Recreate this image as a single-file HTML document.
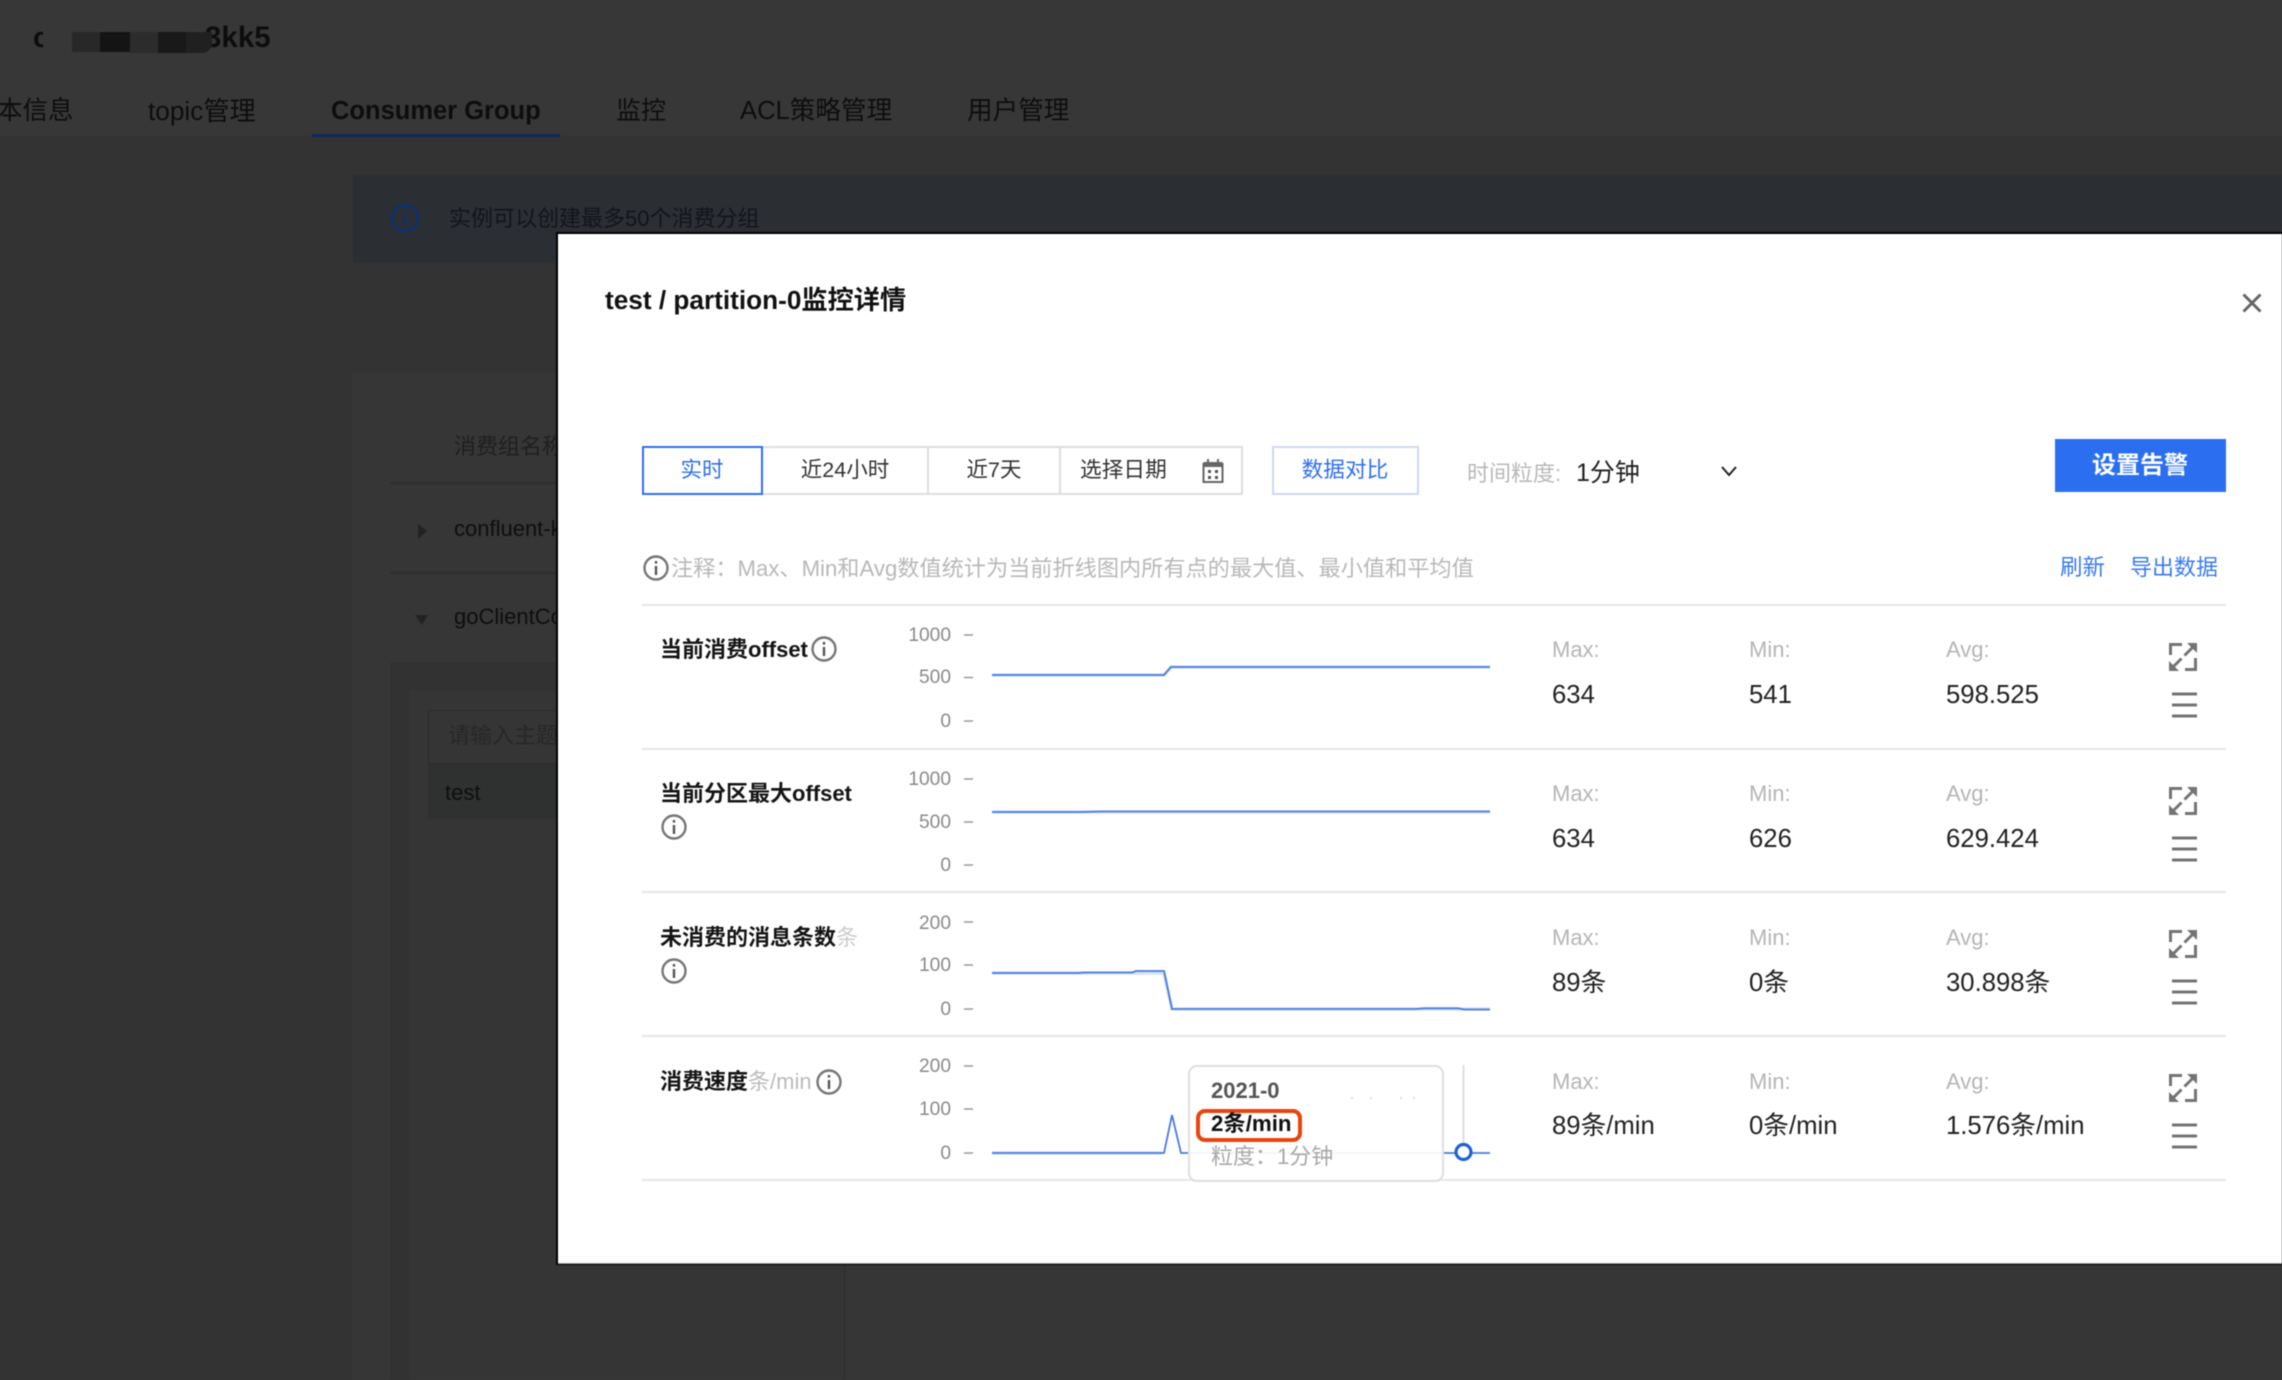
<!DOCTYPE html>
<html lang="zh-CN">
<head>
<meta charset="utf-8">
<title>监控详情</title>
<style>
html,body{margin:0;padding:0;background:#333;}
#p{position:relative;width:2282px;height:1380px;overflow:hidden;background:#333;font-family:"Liberation Sans","Noto Sans CJK SC",sans-serif;color:#333;filter:blur(.45px);}
.b{position:absolute;box-sizing:border-box;}
.t{position:absolute;white-space:nowrap;line-height:40px;height:40px;font-size:22px;}
.d{color:#0d0d0d;}
.g{color:#b8b8b8;}
.k{font-weight:bold;color:#141414;}
.y{color:#8a8a8a;font-size:19.2px;text-align:right;width:60px;left:891px;margin-top:1px;}
.v{color:#222;font-size:25.7px;}
.l{color:#b5b5b5;font-size:22px;}
.c{transform:translateX(-50%);}
svg{position:absolute;left:0;top:0;}
</style>
</head>
<body>
<div id="p">
  <!-- dark backdrop page -->
  <div class="b" style="left:0;top:0;width:2282px;height:137px;background:#373737;"></div>
  <div class="b" style="left:0;top:136px;width:2282px;height:2px;background:#323232;"></div>
  <div class="t d" style="left:33px;top:18px;font-size:29px;font-weight:bold;">c</div>
  <div class="t d" style="left:205px;top:18px;font-size:29.500px;font-weight:bold;">3kk5</div>
  <div class="b" style="left:43px;top:26px;width:29px;height:24px;background:#373737;"></div>
  <div class="b" style="left:72px;top:32px;width:28px;height:20px;background:#282828;"></div>
  <div class="b" style="left:100px;top:32px;width:30px;height:20px;background:#141414;"></div>
  <div class="b" style="left:130px;top:32px;width:28px;height:21px;background:#2c2c2c;"></div>
  <div class="b" style="left:158px;top:32px;width:28px;height:21px;background:#191919;"></div>
  <div class="b" style="left:186px;top:32px;width:26px;height:21px;background:#202020;border-radius:0 0 10px 0;"></div>

  <div class="t d" style="left:-3px;top:91px;font-size:25.500px;">本信息</div>
  <div class="t d" style="left:148px;top:91px;font-size:26.200px;">topic管理</div>
  <div class="t d" style="left:331px;top:91px;font-size:25.500px;font-weight:bold;">Consumer Group</div>
  <div class="t d" style="left:616px;top:91px;font-size:25px;">监控</div>
  <div class="t d" style="left:740px;top:91px;font-size:25.600px;">ACL策略管理</div>
  <div class="t d" style="left:967px;top:91px;font-size:25.600px;">用户管理</div>
  <div class="b" style="left:312px;top:134px;width:248px;height:3px;background:#0f2860;"></div>

  <div class="b" style="left:353px;top:175px;width:1929px;height:88px;background:#2b2e33;"></div>
  <svg width="2282" height="300" style="pointer-events:none">
    <circle cx="405" cy="218" r="13" fill="none" stroke="#0f2f70" stroke-width="2.800"/>
    <rect x="403.600" y="216" width="2.800" height="10" fill="#0f2f70"/>
    <rect x="403.600" y="210" width="2.800" height="3" fill="#0f2f70"/>
  </svg>
  <div class="t" style="left:449px;top:199px;color:#11151c;font-size:22px;">实例可以创建最多50个消费分组</div>

  <div class="b" style="left:352px;top:373px;width:1930px;height:1007px;background:#363636;"></div>
  <div class="t" style="left:454px;top:427px;color:#1f1f1f;font-size:22px;">消费组名称</div>
  <div class="b" style="left:390px;top:482px;width:200px;height:2px;background:#2f2f2f;"></div>
  <svg width="600" height="700">
    <path d="M418 524 L427 531 L418 539Z" fill="#222"/>
    <path d="M415 615 L428 615 L422 625Z" fill="#222"/>
  </svg>
  <div class="t" style="left:454px;top:509px;color:#0e0e0e;font-size:22px;">confluent-k</div>
  <div class="b" style="left:390px;top:572px;width:200px;height:2px;background:#2f2f2f;"></div>
  <div class="t" style="left:454px;top:597px;color:#0e0e0e;font-size:22px;">goClientCon</div>
  <div class="b" style="left:390px;top:662px;width:455px;height:718px;background:#323232;"></div>
  <div class="b" style="left:409px;top:690px;width:436px;height:690px;background:#353535;border-right:1px solid #2d2d2d;"></div>
  <div class="b" style="left:428px;top:710px;width:200px;height:54px;border:1px solid #2b2b2b;"></div>
  <div class="t" style="left:448px;top:716px;color:#272727;font-size:22px;">请输入主题</div>
  <div class="b" style="left:428px;top:764px;width:200px;height:55px;background:#2f3130;"></div>
  <div class="t" style="left:445px;top:773px;color:#0e0e0e;font-size:22px;">test</div>

  <!-- modal -->
  <div class="b" style="left:556px;top:232px;width:1726px;height:1033px;background:#000;"></div>
  <div class="b" style="left:558px;top:233.500px;width:1724px;height:1030.500px;background:#fff;border-bottom:1px solid #999;"></div>

  <div class="t" style="left:605px;top:280px;font-size:26.200px;font-weight:bold;color:#111;">test / partition-0监控详情</div>

  <svg width="2282" height="1380">
    <!-- close -->
    <path d="M2243.500 294.500 L2260.500 311.500 M2260.500 294.500 L2243.500 311.500" stroke="#666" stroke-width="3" fill="none"/>
    <!-- chevron -->
    <path d="M1722 467 L1729 475 L1736 467" stroke="#222" stroke-width="2" fill="none"/>
    <!-- calendar -->
    <rect x="1203.500" y="464" width="19" height="18" fill="none" stroke="#666" stroke-width="2"/>
    <rect x="1203.500" y="462" width="19" height="5" fill="#666"/>
    <rect x="1207" y="459" width="2" height="4" fill="#666"/>
    <rect x="1217" y="459" width="2" height="4" fill="#666"/>
    <rect x="1208" y="470" width="3" height="3" fill="#555"/>
    <rect x="1215" y="470" width="3" height="3" fill="#555"/>
    <rect x="1208" y="476" width="3" height="3" fill="#555"/>
    <rect x="1215" y="476" width="3" height="3" fill="#555"/>
    <!-- note info -->
    <g fill="none" stroke="#777" stroke-width="2.400"><circle cx="656" cy="568" r="11.500"/></g>
    <rect x="654.800" y="566" width="2.400" height="9" fill="#555"/><rect x="654.800" y="561" width="2.400" height="2.600" fill="#555"/>
    <!-- row lines -->
    <g fill="#e5e5e5">
      <rect x="642" y="604" width="1584" height="2"/>
      <rect x="642" y="748" width="1584" height="2"/>
      <rect x="642" y="891" width="1584" height="2"/>
      <rect x="642" y="1035" width="1584" height="2"/>
      <rect x="642" y="1179" width="1584" height="2"/>
    </g>
    <!-- ticks -->
    <g stroke="#999" stroke-width="1.600">
      <path d="M964 635H973M964 677.500H973M964 721H973"/>
      <path d="M964 779H973M964 822H973M964 865H973"/>
      <path d="M964 922H973M964 965H973M964 1009H973"/>
      <path d="M964 1066H973M964 1109H973M964 1153H973"/>
    </g>
    <!-- chart lines -->
    <g fill="none" stroke="#d5e1f8" stroke-width="3.600">
      <path d="M992 675H1164L1171 667H1490"/>
      <path d="M992 812H1490"/>
      <path d="M992 973H1164L1172 1009H1490"/>
      <path d="M992 1153H1162"/>
    </g>
    <g fill="none" stroke="#4a7bdb" stroke-width="1.800">
      <path d="M992 675H1164L1171 667H1490"/>
      <path d="M992 812H1080L1100 811.500H1490"/>
      <path d="M992 973H1078L1085 972.500H1132L1136 971H1164L1172 1009H1416L1424 1008.300H1458L1464 1009.500H1490"/>
      <path d="M992 1153H1164L1172 1115L1181 1153H1490"/>
    </g>
    <!-- info icons -->
    <g fill="none" stroke="#777" stroke-width="2.400">
      <circle cx="824" cy="649" r="11.500"/>
      <circle cx="674" cy="827" r="11.500"/>
      <circle cx="674" cy="971" r="11.500"/>
      <circle cx="829" cy="1082" r="11.500"/>
    </g>
    <g fill="#555">
      <rect x="822.800" y="647" width="2.400" height="9"/><rect x="822.800" y="642" width="2.400" height="2.600"/>
      <rect x="672.800" y="825" width="2.400" height="9"/><rect x="672.800" y="820" width="2.400" height="2.600"/>
      <rect x="672.800" y="969" width="2.400" height="9"/><rect x="672.800" y="964" width="2.400" height="2.600"/>
      <rect x="827.800" y="1080" width="2.400" height="9"/><rect x="827.800" y="1075" width="2.400" height="2.600"/>
    </g>
    <!-- fullscreen and menu icons -->
    <g fill="none" stroke="#747474" stroke-width="3">
      <path d="M2170.500 655V644.500H2182M2195.500 658V669.500H2185"/>
      <path d="M2184.500 655.500L2193 647"/>
      <path d="M2181.500 658.500L2173 667"/>
      <path d="M2172 694H2197M2172 705H2197M2172 716H2197"/>
    </g>
    <path d="M2187 643H2197V653Z M2169 661V671H2179Z" fill="#747474"/>
    <g transform="translate(0 144)">
      <g fill="none" stroke="#747474" stroke-width="3">
        <path d="M2170.500 655V644.500H2182M2195.500 658V669.500H2185"/>
        <path d="M2184.500 655.500L2193 647"/>
        <path d="M2181.500 658.500L2173 667"/>
        <path d="M2172 694H2197M2172 705H2197M2172 716H2197"/>
      </g>
      <path d="M2187 643H2197V653Z M2169 661V671H2179Z" fill="#747474"/>
    </g>
    <g transform="translate(0 287)">
      <g fill="none" stroke="#747474" stroke-width="3">
        <path d="M2170.500 655V644.500H2182M2195.500 658V669.500H2185"/>
        <path d="M2184.500 655.500L2193 647"/>
        <path d="M2181.500 658.500L2173 667"/>
        <path d="M2172 694H2197M2172 705H2197M2172 716H2197"/>
      </g>
      <path d="M2187 643H2197V653Z M2169 661V671H2179Z" fill="#747474"/>
    </g>
    <g transform="translate(0 431)">
      <g fill="none" stroke="#747474" stroke-width="3">
        <path d="M2170.500 655V644.500H2182M2195.500 658V669.500H2185"/>
        <path d="M2184.500 655.500L2193 647"/>
        <path d="M2181.500 658.500L2173 667"/>
        <path d="M2172 694H2197M2172 705H2197M2172 716H2197"/>
      </g>
      <path d="M2187 643H2197V653Z M2169 661V671H2179Z" fill="#747474"/>
    </g>
    <!-- crosshair -->
    <path d="M1463.500 1065V1144" stroke="#ddd" stroke-width="2"/>
    <circle cx="1463.500" cy="1152" r="7.500" fill="#fff" stroke="#1f63d0" stroke-width="3.200"/>
  </svg>

  <!-- toolbar -->
  <div class="b" style="left:642px;top:446px;width:601px;height:49px;border:2px solid #dedede;"></div>
  <div class="b" style="left:927px;top:446px;width:2px;height:49px;background:#dedede;"></div>
  <div class="b" style="left:1059px;top:446px;width:2px;height:49px;background:#dedede;"></div>
  <div class="b" style="left:642px;top:446px;width:121px;height:49px;border:2px solid #2f6fef;background:#fff;"></div>
  <div class="t c" style="left:702px;top:450px;color:#2f6fef;font-size:21.500px;">实时</div>
  <div class="t c" style="left:845px;top:450px;font-size:21.500px;">近24小时</div>
  <div class="t c" style="left:994px;top:450px;font-size:21.500px;">近7天</div>
  <div class="t" style="left:1080px;top:450px;font-size:21.700px;">选择日期</div>
  <div class="b" style="left:1272px;top:446px;width:147px;height:49px;border:2px solid #cdd8ee;"></div>
  <div class="t c" style="left:1345px;top:450px;color:#2f6fef;font-size:21.700px;">数据对比</div>
  <div class="t g" style="left:1467px;top:454px;font-size:22px;">时间粒度:</div>
  <div class="t" style="left:1576px;top:453px;font-size:25px;color:#222;">1分钟</div>
  <div class="b" style="left:2055px;top:438.500px;width:171px;height:53px;background:#2b6ff0;"></div>
  <div class="t c" style="left:2140px;top:446px;color:#fff;font-size:24px;font-weight:bold;">设置告警</div>

  <div class="t g" style="left:671px;top:549px;font-size:22.180px;">注释：Max、Min和Avg数值统计为当前折线图内所有点的最大值、最小值和平均值</div>
  <div class="t" style="left:2060px;top:548px;color:#3a7bf0;font-size:22.500px;">刷新</div>
  <div class="t" style="left:2130px;top:548px;color:#3a7bf0;font-size:22px;">导出数据</div>

  <!-- labels -->
  <div class="t k" style="left:660px;top:630px;font-size:22px;">当前消费offset</div>
  <div class="t k" style="left:660px;top:774px;font-size:22px;">当前分区最大offset</div>
  <div class="t k" style="left:660px;top:918px;font-size:22px;">未消费的消息条数<span style="font-weight:normal;color:#ccc;">条</span></div>
  <div class="t k" style="left:660px;top:1062px;font-size:22px;">消费速度<span style="font-weight:normal;color:#bbb;">条/min</span></div>

  <!-- y labels -->
  <div class="t y" style="top:615px;">1000</div><div class="t y" style="top:657px;">500</div><div class="t y" style="top:701px;">0</div>
  <div class="t y" style="top:759px;">1000</div><div class="t y" style="top:802px;">500</div><div class="t y" style="top:845px;">0</div>
  <div class="t y" style="top:903px;">200</div><div class="t y" style="top:945px;">100</div><div class="t y" style="top:989px;">0</div>
  <div class="t y" style="top:1046px;">200</div><div class="t y" style="top:1089px;">100</div><div class="t y" style="top:1133px;">0</div>

  <!-- stats -->
  <div class="t l" style="left:1552px;top:630px;">Max:</div><div class="t l" style="left:1749px;top:630px;">Min:</div><div class="t l" style="left:1946px;top:630px;">Avg:</div>
  <div class="t v" style="left:1552px;top:675px;">634</div><div class="t v" style="left:1749px;top:675px;">541</div><div class="t v" style="left:1946px;top:675px;">598.525</div>
  <div class="t l" style="left:1552px;top:774px;">Max:</div><div class="t l" style="left:1749px;top:774px;">Min:</div><div class="t l" style="left:1946px;top:774px;">Avg:</div>
  <div class="t v" style="left:1552px;top:819px;">634</div><div class="t v" style="left:1749px;top:819px;">626</div><div class="t v" style="left:1946px;top:819px;">629.424</div>
  <div class="t l" style="left:1552px;top:918px;">Max:</div><div class="t l" style="left:1749px;top:918px;">Min:</div><div class="t l" style="left:1946px;top:918px;">Avg:</div>
  <div class="t v" style="left:1552px;top:963px;">89条</div><div class="t v" style="left:1749px;top:963px;">0条</div><div class="t v" style="left:1946px;top:963px;">30.898条</div>
  <div class="t l" style="left:1552px;top:1062px;">Max:</div><div class="t l" style="left:1749px;top:1062px;">Min:</div><div class="t l" style="left:1946px;top:1062px;">Avg:</div>
  <div class="t v" style="left:1552px;top:1106px;">89条/min</div><div class="t v" style="left:1749px;top:1106px;">0条/min</div><div class="t v" style="left:1946px;top:1106px;">1.576条/min</div>

  <!-- tooltip -->
  <div class="b" style="left:1188px;top:1065px;width:256px;height:117px;background:rgba(255,255,255,.93);border:2px solid #dfdfdf;border-radius:9px;"></div>
  <div class="t" style="left:1211px;top:1071px;width:69px;overflow:hidden;color:#555;font-size:22px;font-weight:bold;">2021-08</div>
  <div class="b" style="left:1196px;top:1109px;width:106px;height:33px;border:4px solid #e8440f;border-radius:9px;"></div>
  <div class="t" style="left:1211px;top:1104px;color:#111;font-size:22.300px;font-weight:bold;">2条/min</div>
  <div class="t" style="left:1211px;top:1137px;color:#a8a8a8;font-size:22px;">粒度：1分钟</div>
  <div class="b" style="left:1351px;top:1097px;width:2px;height:2px;background:#ddd;"></div>
  <div class="b" style="left:1370px;top:1097px;width:2px;height:2px;background:#ddd;"></div>
  <div class="b" style="left:1400px;top:1097px;width:2px;height:2px;background:#ddd;"></div>
  <div class="b" style="left:1413px;top:1097px;width:2px;height:2px;background:#ddd;"></div>
</div>
</body>
</html>
